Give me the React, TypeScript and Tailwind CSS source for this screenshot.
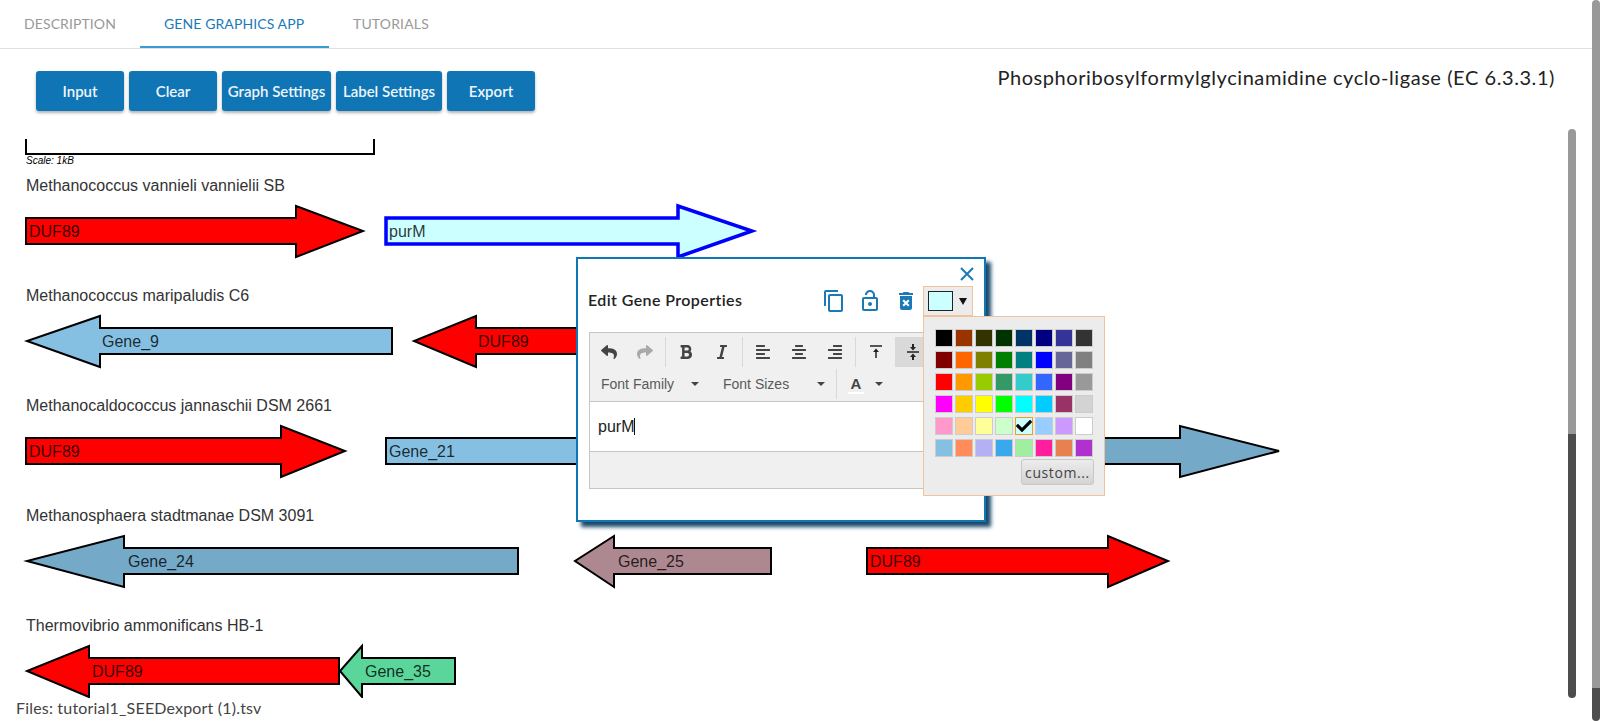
import type { ReactNode } from 'react';
import { FaAlignCenter, FaAlignLeft, FaAlignRight, FaBold, FaCheck, FaItalic, FaReply, FaShare } from 'react-icons/fa';
import { MdDeleteForever, MdOutlineContentCopy, MdOutlineLockOpen } from 'react-icons/md';

type Gene = {
  label: string;
  from: number; // tail x
  neck: number; // where the head starts
  tip: number;
  labelX: number;
  fill: string;
  selected?: boolean;
};

const rows: { title: string; genes: Gene[] }[] = [
  {
    title: 'Methanococcus vannieli vannielii SB',
    genes: [
      { label: 'DUF89', from: 26, neck: 296, tip: 363, labelX: 29, fill: '#ff0000' },
      { label: 'purM', from: 386, neck: 678, tip: 752, labelX: 389, fill: '#ccffff', selected: true },
    ],
  },
  {
    title: 'Methanococcus maripaludis C6',
    genes: [
      { label: 'Gene_9', from: 392, neck: 100, tip: 27, labelX: 102, fill: '#85c0e3' },
      { label: 'DUF89', from: 640, neck: 476, tip: 414, labelX: 478, fill: '#ff0000' },
    ],
  },
  {
    title: 'Methanocaldococcus jannaschii DSM 2661',
    genes: [
      { label: 'DUF89', from: 26, neck: 281, tip: 345, labelX: 29, fill: '#ff0000' },
      { label: 'Gene_21', from: 386, neck: 900, tip: 960, labelX: 389, fill: '#85c0e3' },
      { label: '', from: 1000, neck: 1180, tip: 1279, labelX: 1004, fill: '#74a9c8' },
    ],
  },
  {
    title: 'Methanosphaera stadtmanae DSM 3091',
    genes: [
      { label: 'Gene_24', from: 518, neck: 124, tip: 27, labelX: 128, fill: '#74a9c8' },
      { label: 'Gene_25', from: 771, neck: 614, tip: 575, labelX: 618, fill: '#ae8890' },
      { label: 'DUF89', from: 867, neck: 1108, tip: 1168, labelX: 870, fill: '#ff0000' },
    ],
  },
  {
    title: 'Thermovibrio ammonificans HB-1',
    genes: [
      { label: 'DUF89', from: 339, neck: 89, tip: 27, labelX: 92, fill: '#ff0000' },
      { label: 'Gene_35', from: 455, neck: 362, tip: 340, labelX: 365, fill: '#5bd69a' },
    ],
  },
];

const swatches = [
  'bg-[#000000]', 'bg-[#993300]', 'bg-[#333300]', 'bg-[#003300]', 'bg-[#003366]', 'bg-[#000080]', 'bg-[#333399]', 'bg-[#333333]',
  'bg-[#800000]', 'bg-[#ff6600]', 'bg-[#808000]', 'bg-[#008000]', 'bg-[#008080]', 'bg-[#0000ff]', 'bg-[#666699]', 'bg-[#808080]',
  'bg-[#ff0000]', 'bg-[#ff9900]', 'bg-[#99cc00]', 'bg-[#339966]', 'bg-[#33cccc]', 'bg-[#3366ff]', 'bg-[#800080]', 'bg-[#999999]',
  'bg-[#ff00ff]', 'bg-[#ffcc00]', 'bg-[#ffff00]', 'bg-[#00ff00]', 'bg-[#00ffff]', 'bg-[#00ccff]', 'bg-[#993366]', 'bg-[#d3d3d3]',
  'bg-[#ff99cc]', 'bg-[#ffcc99]', 'bg-[#ffff99]', 'bg-[#ccffcc]', 'bg-[#ccffff]', 'bg-[#99ccff]', 'bg-[#cc99ff]', 'bg-[#ffffff]',
  'bg-[#85c0e3]', 'bg-[#ff8c5a]', 'bg-[#b4b0f5]', 'bg-[#3aa8ec]', 'bg-[#a0efa0]', 'bg-[#ff1f9e]', 'bg-[#e8814f]', 'bg-[#b030d0]',
];

const buttons = [
  { label: 'Input', width: 'w-[88px]' },
  { label: 'Clear', width: 'w-[88px]' },
  { label: 'Graph Settings', width: 'w-[109px]' },
  { label: 'Label Settings', width: 'w-[106px]' },
  { label: 'Export', width: 'w-[88px]' },
];

// svg rows are 60px tall, the gene runs through the middle
function GeneArrow({ gene }: { gene: Gene }) {
  const { from, neck, tip } = gene;
  const points = [
    [from, 17],
    [neck, 17],
    [neck, 5],
    [tip, 30],
    [neck, 56],
    [neck, 43],
    [from, 43],
  ]
    .map((p) => p.join(','))
    .join(' ');

  return (
    <g>
      <polygon
        points={points}
        fill={gene.fill}
        stroke={gene.selected ? '#0000ff' : '#000000'}
        strokeWidth={gene.selected ? 3.5 : 2}
      />
      <text x={gene.labelX} y={36} fontSize={16} fill="#000000" fillOpacity={0.8} fontFamily="'Liberation Sans', Arial, sans-serif">
        {gene.label}
      </text>
    </g>
  );
}

function ToolButton({ children, active, muted }: { children: ReactNode; active?: boolean; muted?: boolean }) {
  return (
    <div
      className={`flex h-[30px] w-[36px] shrink-0 items-center justify-center text-[16px] ${active ? 'bg-[#d9d9d9]' : ''} ${muted ? 'text-[#aaaaaa]' : 'text-[#444444]'}`}
    >
      {children}
    </div>
  );
}

function Separator() {
  return <div className="mx-[2px] h-[30px] w-px shrink-0 bg-[#d9d9d9]" />;
}

function Caret() {
  return <div className="h-0 w-0 border-x-4 border-t-4 border-x-transparent border-t-[#444444]" />;
}

function AlignTopIcon() {
  return (
    <svg width="12" height="14" viewBox="0 0 12 14">
      <path d="M0 1h12" stroke="#222222" strokeWidth="1.5" />
      <path d="M6 13V6" stroke="#222222" strokeWidth="1.5" />
      <path d="M6 3.5l3 3.5H3z" fill="#222222" />
    </svg>
  );
}

function AlignMiddleIcon() {
  return (
    <svg width="12" height="16" viewBox="0 0 12 16">
      <path d="M0 8h12" stroke="#222222" strokeWidth="1.5" />
      <path d="M6 6.5L3 3h2V0h2v3h2zM6 9.5L3 13h2v3h2v-3h2z" fill="#222222" />
    </svg>
  );
}

function ColorPicker() {
  return (
    <div className="absolute left-[345px] top-[57px] z-10 h-[180px] w-[182px] border border-[#f2c39a] bg-[#ececec] pl-[11px] pt-3">
      <div className="grid w-[158px] grid-cols-[repeat(8,18px)] gap-x-[2px] gap-y-[4px]">
        {swatches.map((swatch, i) => (
          <div
            key={i}
            className={`flex h-[18px] w-[18px] items-center justify-center border ${swatch} ${i === 36 ? 'border-[#e8a020]' : 'border-[#cccccc]'}`}
          >
            {i === 36 && <FaCheck className="text-[16px] text-black" />}
          </div>
        ))}
      </div>
      <div className="ml-[86px] mt-[2px] flex h-[26px] w-[73px] items-center justify-center rounded-[3px] border border-[#c8c8c8] bg-gradient-to-b from-[#ececec] to-[#d4d4d4] font-['Open_Sans',sans-serif] text-[14px] tracking-[0.6px] text-[#444444]">
        custom...
      </div>
    </div>
  );
}

function EditDialog() {
  return (
    <div className="absolute left-[576px] top-[257px] z-20 h-[265px] w-[410px] border-2 border-[#1077b5] bg-white shadow-[5px_5px_4px_#1d4a6b]">
      <svg className="absolute left-[381px] top-[7px]" width="16" height="16" viewBox="0 0 16 16">
        <path d="M2 2l12 12M14 2L2 14" stroke="#1a7ab8" strokeWidth="2" />
      </svg>

      <div className="mt-[27px] flex h-[30px] items-center pl-[11px] pr-[11px]">
        <span className="mb-[2px] ml-[-1px] font-['Lato',sans-serif] text-[16px] font-semibold tracking-[0.4px] text-[#222222]">Edit Gene Properties</span>
        <div className="ml-auto flex items-center gap-3 text-[#1a7ab8]">
          <MdOutlineContentCopy size={24} />
          <MdOutlineLockOpen size={24} />
        </div>
        <MdDeleteForever size={24} className="ml-3 text-[#1a7ab8]" />
        <div className="ml-[5px] flex h-[30px] w-[50px] items-center border border-[#f2c39a] bg-[#ececec] pl-1">
          <div className="h-5 w-[25px] border border-[#222222] bg-[#ccffff]" />
          <div className="ml-[6px] h-0 w-0 border-x-[4px] border-t-[7px] border-x-transparent border-t-[#111111]" />
        </div>
      </div>

      <div className="ml-[11px] mt-4 w-[386px] border border-[#c5c5c5]">
        <div className="border-b border-[#c5c5c5] bg-[#f0f0f0] pb-[2px] pl-px pt-1">
          <div className="flex items-center">
            <ToolButton><FaReply /></ToolButton>
            <ToolButton muted><FaShare /></ToolButton>
            <Separator />
            <ToolButton><FaBold /></ToolButton>
            <ToolButton><FaItalic /></ToolButton>
            <Separator />
            <ToolButton><FaAlignLeft /></ToolButton>
            <ToolButton><FaAlignCenter /></ToolButton>
            <ToolButton><FaAlignRight /></ToolButton>
            <Separator />
            <ToolButton><AlignTopIcon /></ToolButton>
            <div className="ml-px"><ToolButton active><AlignMiddleIcon /></ToolButton></div>
          </div>
          <div className="mt-[2px] flex h-[30px] items-center font-['Liberation_Sans',sans-serif] text-[14px] text-[#595959]">
            <div className="flex w-[120px] items-center pl-[10px] pr-2">
              <span>Font Family</span>
              <div className="ml-auto mr-1"><Caret /></div>
            </div>
            <div className="ml-[2px] flex w-[119px] items-center pl-[10px]">
              <span>Font Sizes</span>
              <div className="ml-auto mr-[7px]"><Caret /></div>
            </div>
            <div className="ml-[4px] h-[30px] w-px bg-[#d9d9d9]" />
            <div className="ml-[11px] flex w-[16px] flex-col items-center pt-[2px]">
              <span className="text-[15px] font-bold leading-[15px] text-[#444444]">A</span>
              <div className="mt-px h-[2px] w-4 bg-white" />
            </div>
            <div className="ml-[11px]"><Caret /></div>
          </div>
        </div>
        <div className="flex h-[50px] items-center border-b border-[#c5c5c5] bg-white pl-2 font-['Liberation_Sans',sans-serif] text-[16px] text-[#222222]">
          purM
          <div className="h-[17px] w-px bg-[#111111]" />
        </div>
        <div className="h-[36px] bg-[#f0f0f0]" />
      </div>

      <ColorPicker />
    </div>
  );
}

export default function App() {
  return (
    <div className="relative flex h-[721px] w-[1600px] overflow-hidden bg-white">
      <div className="flex w-[1592px] flex-col">
        {/* Tabs */}
        <div className="flex h-[49px] shrink-0 border-b border-[#e0e0e0] font-['Lato',sans-serif] text-[14px] uppercase text-[#999999]">
          <div className="flex w-[140px] items-center pl-6 pb-[2px] tracking-[0.1px]">Description</div>
          <div className="flex h-[48px] w-[189px] items-center border-b-2 border-[#3a9bd5] pl-6 tracking-[0.1px] text-[#1a7ab8]">Gene Graphics App</div>
          <div className="flex items-center pl-6 pb-[2px] tracking-[0.15px]">Tutorials</div>
        </div>

        <div className="flex h-[649px] shrink-0">
          <div className="w-[1568px] overflow-hidden">
            <div className="flex items-start pl-9 pr-[13px] pt-[22px]">
              <div className="flex gap-[5px]">
                {buttons.map((b) => (
                  <div
                    key={b.label}
                    className={`flex h-10 items-center justify-center rounded-[3px] bg-[#0f75b5] font-['Lato',sans-serif] text-[15px] font-semibold text-[#eef5fa] shadow-[0_2px_3px_rgba(0,0,0,0.3)] ${b.width}`}
                  >
                    {b.label}
                  </div>
                ))}
              </div>
              <div className="ml-auto mt-[-7px] font-['Lato',sans-serif] text-[20px] leading-[26px] tracking-[0.57px] text-[#222222]">
                Phosphoribosylformylglycinamidine cyclo-ligase (EC 6.3.3.1)
              </div>
            </div>

            {/* Scale bar */}
            <div className="mt-[28px] h-[18px] pl-[25px]">
              <svg width="352" height="16" viewBox="0 0 352 16">
                <path d="M1 0v15h348V0" fill="none" stroke="#000000" strokeWidth="2" />
              </svg>
            </div>
            <div className="pl-[26px] font-['Liberation_Sans',sans-serif] text-[10px] italic leading-[7px] text-black">Scale: 1kB</div>

            <div className="mt-[10px]">
              {rows.map((row) => (
                <div key={row.title} className="h-[110px]">
                  <div className="h-[22px] pl-[26px] font-['Liberation_Sans',sans-serif] text-[16px] leading-[24px] text-[#333333]">
                    {row.title}
                  </div>
                  <svg className="mt-[5px]" width="1568" height="60" viewBox="0 0 1568 60">
                    {row.genes.map((gene) => (
                      <GeneArrow key={gene.label + gene.from} gene={gene} />
                    ))}
                  </svg>
                </div>
              ))}
            </div>
          </div>

          {/* inner scrollbar */}
          <div className="mt-20 flex w-2 flex-col">
            <div className="h-[305px] rounded-t-full bg-[#999999]" />
            <div className="flex-1 rounded-b-full bg-[#4d4d4d]" />
          </div>
        </div>

        <div className="flex h-[23px] items-center pb-1 pl-4 font-['Lato',sans-serif] text-[16px] tracking-[0.18px] text-[#444444]">
          Files: tutorial1_SEEDexport (1).tsv
        </div>
      </div>

      {/* page scrollbar */}
      <div className="flex w-2 flex-col">
        <div className="h-[688px] rounded-t-full bg-[#999999]" />
        <div className="flex-1 rounded-b-full bg-[#4d4d4d]" />
      </div>

      <EditDialog />
    </div>
  );
}
